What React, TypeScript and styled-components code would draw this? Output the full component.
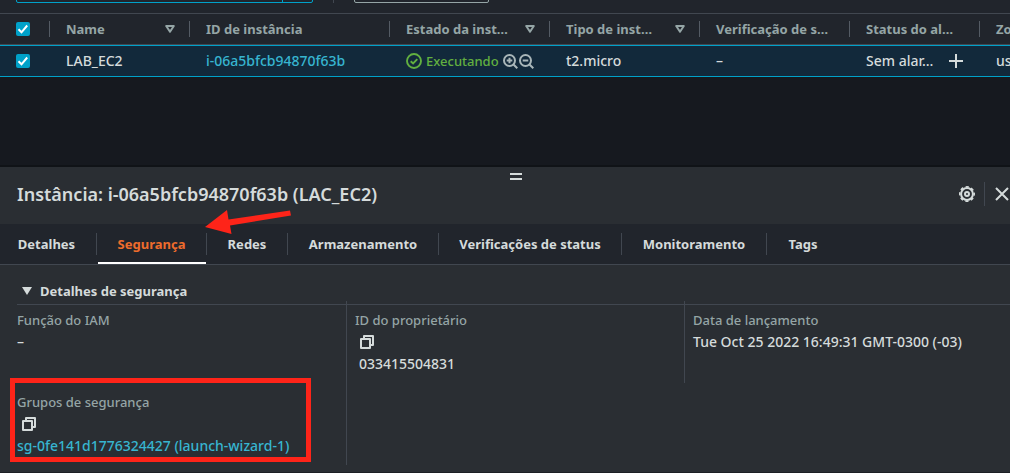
import React from 'react';
import styled, { createGlobalStyle } from 'styled-components';

const color = {
  page: '#16191f',
  bar: '#21252c',
  panel: '#2a2e33',
  selected: '#12293b',
  line: '#414750',
  label: '#95a5a6',
  text: '#d5dbdb',
  accent: '#00a1c9',
  link: '#37b5d0',
  green: '#62b040',
  orange: '#ee6c2c',
  mark: '#fe2419',
};

const GlobalStyle = createGlobalStyle`
  *, *::before, *::after { box-sizing: border-box; }
  body {
    margin: 0;
    background: ${color.page};
    color: ${color.text};
    font-family: 'Noto Sans', 'Open Sans', sans-serif;
    font-size: 14px;
    font-weight: 500;
    line-height: 22px;
  }
  button, input { font: inherit; }
  svg { flex: none; }
`;

const Page = styled.div`
  display: flex;
  flex-direction: column;
  min-height: 100vh;
  overflow: hidden;
`;

/* Toolbar, scrolled so that only the foot of its fields shows */
const Toolbar = styled.div`
  display: flex;
  align-items: flex-end;
  height: 14px;
  padding: 0 16px 10px;
  overflow: hidden;
  background: ${color.bar};
  border-bottom: 1px solid ${color.line};
`;

const SplitButton = styled.div`
  display: flex;
  flex: none;
  width: 297px;
  height: 32px;
  border: 1px solid ${color.accent};
  border-radius: 2px;
`;

const SplitPart = styled.button<{ $grow?: boolean }>`
  flex: ${(p) => (p.$grow ? '1' : '0 0 30px')};
  padding: 0;
  border: 0;
  border-left: ${(p) => (p.$grow ? '0' : `1px solid ${color.accent}`)};
  background: transparent;
`;

const ToolbarRule = styled.span`
  flex: none;
  width: 1px;
  height: 32px;
  margin: 0 20px;
  background: ${color.line};
`;

const FilterButton = styled.button`
  flex: none;
  width: 135px;
  height: 32px;
  border: 1px solid ${color.label};
  border-radius: 2px;
  background: transparent;
`;

const TableScroller = styled.div`
  overflow: hidden;
`;

const Table = styled.table`
  width: 1130px;
  table-layout: fixed;
  border-collapse: separate;
  border-spacing: 0;
`;

const HeadRow = styled.tr`
  height: 31px;
  background: ${color.bar};
`;

const HeadCell = styled.th`
  padding: 0;
  border-bottom: 1px solid ${color.line};
  color: ${color.label};
  font-size: 13px;
  font-weight: 700;
  text-align: left;
  white-space: nowrap;
`;

const HeadInner = styled.div`
  display: flex;
  align-items: center;
  justify-content: space-between;
  height: 16px;
  padding: 0 14px 0 16px;
  border-right: 1px solid #545b64;
`;

const BodyRow = styled.tr`
  height: 32px;
  background: ${color.selected};
`;

const Cell = styled.td`
  padding: 0 16px;
  border-top: 1px solid ${color.accent};
  border-bottom: 1px solid ${color.accent};
  white-space: nowrap;
`;

const CellInner = styled.div<{ $gap?: number }>`
  display: flex;
  align-items: center;
  gap: ${(p) => p.$gap ?? 0}px;
`;

const Status = styled.span`
  color: ${color.green};
  font-size: 13px;
`;

const CheckBox = styled.input`
  appearance: none;
  display: block;
  width: 14px;
  height: 14px;
  margin: 0;
  border-radius: 2px;
  background: ${color.accent};
`;

const CheckLabel = styled.label`
  display: grid;
  width: 14px;

  > * {
    grid-area: 1 / 1;
  }

  svg {
    pointer-events: none;
  }
`;

const Link = styled.a`
  color: ${color.link};
  text-decoration: none;
`;

const IconButton = styled.button`
  display: flex;
  align-items: center;
  padding: 0;
  border: 0;
  background: transparent;
  color: inherit;
`;

const Gap = styled.div`
  flex: none;
  height: 88px;
  background: ${color.page};
`;

const Panel = styled.section`
  display: flex;
  flex: 1;
  flex-direction: column;
  position: relative;
  border-top: 2px solid #101317;
  border-bottom: 1px solid #1c1f24;
  background: ${color.panel};
`;

const PanelHeader = styled.header`
  display: flex;
  align-items: center;
  justify-content: space-between;
  height: 57px;
  padding: 0 0 4px 17px;
`;

const PanelTitle = styled.h2`
  margin: 0;
  font-size: 18px;
  font-weight: 600;
  line-height: 22px;
`;

const PanelActions = styled.div`
  display: flex;
  align-items: center;
  height: 24px;
  padding-right: 1px;
`;

const ActionRule = styled.span`
  width: 1px;
  height: 24px;
  margin: 0 10px 0 9px;
  background: ${color.line};
`;

const Handle = styled.button`
  position: absolute;
  top: 6px;
  left: 510px;
  width: 12px;
  height: 7px;
  padding: 0;
  border: solid ${color.text};
  border-width: 2px 0;
  background: transparent;
`;

const TabList = styled.div`
  display: flex;
  height: 41px;
  margin-left: -3px;
  background: ${color.bar};
  border-bottom: 1px solid ${color.line};
`;

const Tab = styled.button<{ $width: number; $active?: boolean }>`
  display: flex;
  flex: none;
  flex-direction: column;
  align-items: stretch;
  justify-content: space-between;
  width: ${(p) => p.$width}px;
  padding: 9px 0 0;
  border: 0;
  background: transparent;
  color: ${(p) => (p.$active ? color.orange : color.text)};
  font-size: 13px;
  font-weight: 700;
  white-space: nowrap;

  &::after {
    content: '';
    height: 2px;
    margin: 0 1px;
    background: ${(p) => (p.$active ? '#ffffff' : 'transparent')};
  }
`;

const TabText = styled.span`
  height: 22px;
  border-right: 1px solid ${color.line};
  text-align: center;
  line-height: 22px;

  ${Tab}:last-child & {
    border-right: 0;
  }
`;

const SectionTitle = styled.h3`
  display: flex;
  align-items: center;
  gap: 8px;
  height: 40px;
  margin: 0 0 0 17px;
  padding: 13px 0 0 5px;
  border-bottom: 1px solid ${color.line};
  font-size: 13px;
  font-weight: 700;
  line-height: 22px;
`;

/* The detail columns run a little past the right edge of the window */
const Details = styled.dl`
  display: grid;
  grid-template-columns: repeat(3, 1fr);
  grid-auto-rows: 82px;
  margin: -4px -12px 7px 8px;
`;

const Detail = styled.div<{ $first?: boolean }>`
  position: relative;
  padding: 8px;
  border-left: 1px solid ${(p) => (p.$first ? 'transparent' : color.line)};
`;

const Term = styled.dt`
  color: ${color.label};
  font-size: 13px;
`;

const Value = styled.dd<{ $indent?: boolean }>`
  margin: 0;
  padding-left: ${(p) => (p.$indent ? 4 : 0)}px;
  white-space: nowrap;
`;

const CopyButton = styled(IconButton)`
  height: 22px;
  padding: 0 5px;
`;

const Highlight = styled.div`
  position: absolute;
  inset: -5px 35px 3px 1px;
  border: 5px solid ${color.mark};
  pointer-events: none;
`;

const Arrow = styled.svg`
  position: absolute;
  top: 43px;
  left: 204px;
  pointer-events: none;
`;

const Check = () => (
  <svg width="14" height="14" viewBox="0 0 14 14" fill="none" stroke="#fff" strokeWidth="2" aria-hidden="true">
    <path d="M2.500 7.300l3 3L11.200 3.500" />
  </svg>
);

const SortIcon = () => (
  <svg width="10" height="8" viewBox="0 0 10 8" fill="none" stroke="currentColor" strokeWidth="2" strokeLinejoin="round" aria-hidden="true">
    <path d="M1.200 1h7.600L5 6.800z" />
  </svg>
);

const OkIcon = () => (
  <svg width="16" height="16" viewBox="0 0 16 16" fill="none" stroke={color.green} strokeWidth="1.900" aria-hidden="true">
    <circle cx="8" cy="8" r="7" />
    <path d="M4.700 8.200l2.400 2.300 4.200-4.400" />
  </svg>
);

const ZoomIcon = ({ plus }: { plus?: boolean }) => (
  <svg width="15" height="15" viewBox="0 0 15 15" fill="none" stroke="#a9b6b9" strokeWidth="2" aria-hidden="true">
    <circle cx="6.500" cy="6.500" r="5.500" />
    <path d={plus ? 'M10.500 10.500l3.800 3.800M3.700 6.500h5.600M6.500 3.700v5.600' : 'M10.500 10.500l3.800 3.800M3.700 6.500h5.600'} />
  </svg>
);

const PlusIcon = () => (
  <svg width="14" height="14" viewBox="0 0 14 14" stroke="currentColor" strokeWidth="2" aria-hidden="true">
    <path d="M0 7h14M7 0v14" />
  </svg>
);

const CopyIcon = () => (
  <svg width="14" height="14" viewBox="0 0 14 14" fill="none" stroke="currentColor" strokeWidth="2" strokeLinejoin="round" aria-hidden="true">
    <path d="M1 4h9v9H1zM4 4V1h9v9h-3" />
  </svg>
);

/* Eight-lobed cog: a ring with round teeth and a small hub */
const GearIcon = () => (
  <svg width="16" height="16" viewBox="0 0 16 16" fill="none" stroke="currentColor" aria-hidden="true">
    <circle cx="8" cy="8" r="5.900" strokeWidth="2" />
    <circle cx="8" cy="8" r="7.200" strokeWidth="1.600" strokeDasharray="3.200 2.455" strokeDashoffset="1.600" />
    <circle cx="8" cy="8" r="2" strokeWidth="2" />
  </svg>
);

const CloseIcon = () => (
  <svg width="14" height="14" viewBox="0 0 14 14" fill="none" stroke="currentColor" strokeWidth="2" aria-hidden="true">
    <path d="M1 1l12 12M13 1L1 13" />
  </svg>
);

const Tick = ({ label }: { label: string }) => (
  <CheckLabel>
    <CheckBox type="checkbox" defaultChecked aria-label={label} />
    <Check />
  </CheckLabel>
);

const columns = [
  { name: 'Name', width: 140, sortable: true },
  { name: 'ID de instância', width: 200 },
  { name: 'Estado da inst…', width: 160, sortable: true },
  { name: 'Tipo de inst…', width: 150, sortable: true },
  { name: 'Verificação de s…', width: 150 },
  { name: 'Status do al…', width: 130 },
  { name: 'Zona', width: 150 },
];

const tabs = [
  { name: 'Detalhes', width: 100 },
  { name: 'Segurança', width: 110, active: true },
  { name: 'Redes', width: 81 },
  { name: 'Armazenamento', width: 151 },
  { name: 'Verificações de status', width: 183 },
  { name: 'Monitoramento', width: 145 },
  { name: 'Tags', width: 72 },
];

export default function App() {
  return (
    <Page>
      <GlobalStyle />
      <Toolbar>
        <SplitButton>
          <SplitPart $grow aria-label="Filtrar" />
          <SplitPart aria-label="Opções" />
        </SplitButton>
        <ToolbarRule />
        <FilterButton aria-label="Limpar filtros" />
      </Toolbar>

      <TableScroller>
        <Table>
          <colgroup>
            <col style={{ width: 50 }} />
            {columns.map((c) => (
              <col key={c.name} style={{ width: c.width }} />
            ))}
          </colgroup>
          <thead>
            <HeadRow>
              <HeadCell>
                <HeadInner>
                  <Tick label="Selecionar tudo" />
                </HeadInner>
              </HeadCell>
              {columns.map((c) => (
                <HeadCell key={c.name} scope="col">
                  <HeadInner>
                    {c.name}
                    {c.sortable && (
                      <IconButton aria-label={`Ordenar por ${c.name}`}>
                        <SortIcon />
                      </IconButton>
                    )}
                  </HeadInner>
                </HeadCell>
              ))}
            </HeadRow>
          </thead>
          <tbody>
            <BodyRow>
              <Cell>
                <Tick label="Selecionar LAB_EC2" />
              </Cell>
              <Cell>LAB_EC2</Cell>
              <Cell>
                <Link href="#instance">i-06a5bfcb94870f63b</Link>
              </Cell>
              <Cell>
                <CellInner $gap={4}>
                  <OkIcon />
                  <Status>Executando</Status>
                  <CellInner $gap={1}>
                    <IconButton aria-label="Ampliar">
                      <ZoomIcon plus />
                    </IconButton>
                    <IconButton aria-label="Reduzir">
                      <ZoomIcon />
                    </IconButton>
                  </CellInner>
                </CellInner>
              </Cell>
              <Cell>t2.micro</Cell>
              <Cell>–</Cell>
              <Cell>
                <CellInner $gap={16}>
                  Sem alar…
                  <IconButton aria-label="Adicionar alarme">
                    <PlusIcon />
                  </IconButton>
                </CellInner>
              </Cell>
              <Cell>us-east-1</Cell>
            </BodyRow>
          </tbody>
        </Table>
      </TableScroller>

      <Gap />

      <Panel>
        <Handle aria-label="Redimensionar painel" />
        <PanelHeader>
          <PanelTitle>Instância: i-06a5bfcb94870f63b (LAC_EC2)</PanelTitle>
          <PanelActions>
            <IconButton aria-label="Preferências">
              <GearIcon />
            </IconButton>
            <ActionRule />
            <IconButton aria-label="Fechar">
              <CloseIcon />
            </IconButton>
          </PanelActions>
        </PanelHeader>

        <TabList role="tablist">
          {tabs.map((t) => (
            <Tab key={t.name} role="tab" aria-selected={!!t.active} $width={t.width} $active={t.active}>
              <TabText>{t.name}</TabText>
            </Tab>
          ))}
        </TabList>

        <SectionTitle>
          <svg width="10" height="8" viewBox="0 0 10 8" aria-hidden="true">
            <path d="M0 0h10L5 8z" fill="currentColor" />
          </svg>
          Detalhes de segurança
        </SectionTitle>

        <Details>
          <Detail $first>
            <Term>Função do IAM</Term>
            <Value>–</Value>
          </Detail>
          <Detail>
            <Term>ID do proprietário</Term>
            <Value>
              <CopyButton aria-label="Copiar ID do proprietário">
                <CopyIcon />
              </CopyButton>
            </Value>
            <Value $indent>033415504831</Value>
          </Detail>
          <Detail>
            <Term>Data de lançamento</Term>
            <Value>Tue Oct 25 2022 16:49:31 GMT-0300 (-03)</Value>
          </Detail>
          <Detail $first>
            <Term>Grupos de segurança</Term>
            <Value>
              <CopyButton aria-label="Copiar grupo de segurança">
                <CopyIcon />
              </CopyButton>
            </Value>
            <Value>
              <Link href="#group">sg-0fe141d1776324427 (launch-wizard-1)</Link>
            </Value>
            <Highlight />
          </Detail>
          <Detail />
        </Details>

        <Arrow width="88" height="34" viewBox="0 0 88 34" fill={color.mark} aria-hidden="true">
          <path d="M1 17L23 0l1.500 9.500L86 .5l1 5L26 15.500 27.500 24z" />
        </Arrow>
      </Panel>
    </Page>
  );
}
